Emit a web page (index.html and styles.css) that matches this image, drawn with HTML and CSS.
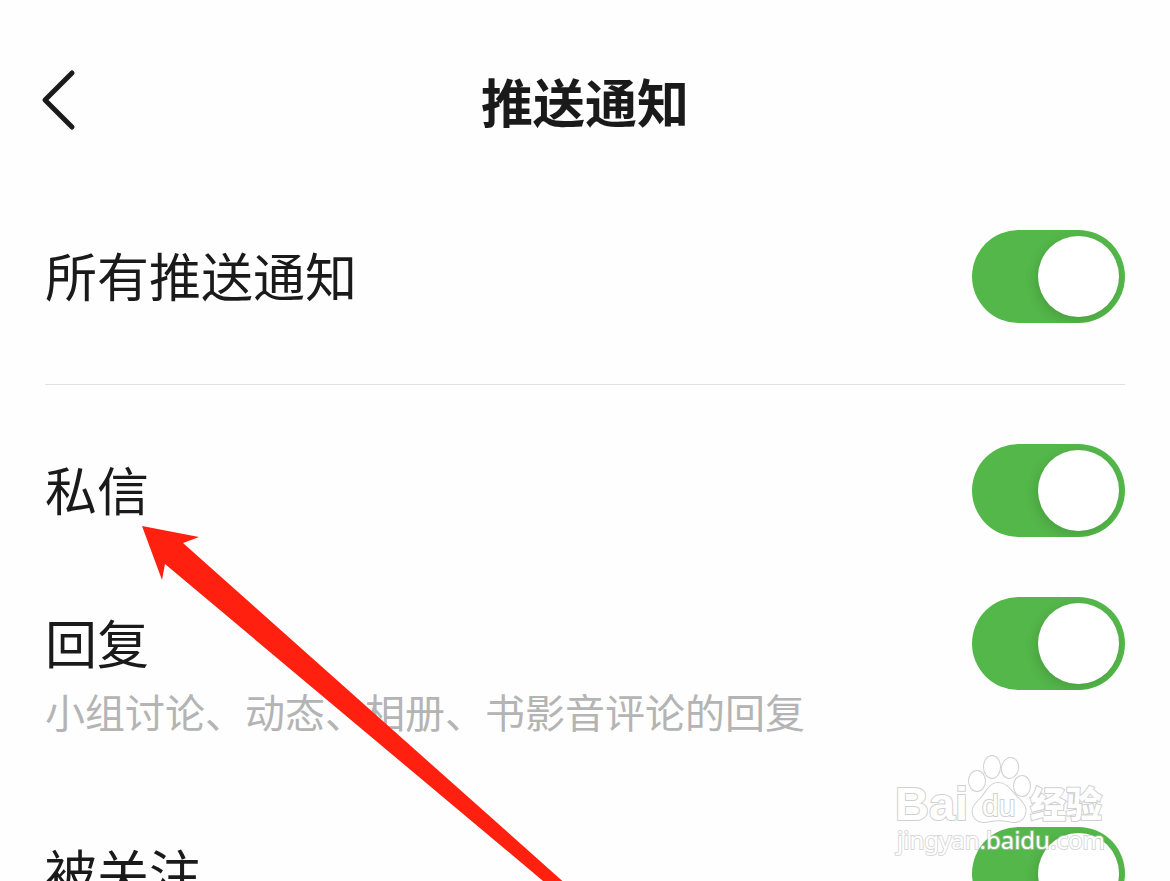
FILE: index.html
```
<!DOCTYPE html>
<html lang="zh-CN">
<head>
<meta charset="UTF-8">
<meta name="viewport" content="width=device-width, initial-scale=1.0">
<title>推送通知</title>
<link rel="stylesheet" href="styles.css">
</head>
<body>

<header class="header">
    <button class="back-button" type="button" aria-label="返回">
        <svg width="36" height="64" viewBox="0 0 36 64"><path d="M32 5 L5 32 L32 59"/></svg>
    </button>
    <h1>推送通知</h1>
</header>

<main class="settings">
    <div class="row row-all">
        <label class="row-title" for="pushAll">所有推送通知</label>
        <input class="switch" type="checkbox" id="pushAll" checked>
    </div>

    <div class="row">
        <label class="row-title" for="pushMessage">私信</label>
        <input class="switch" type="checkbox" id="pushMessage" checked>
    </div>

    <div class="row">
        <div class="row-text">
            <label class="row-title" for="pushReply">回复</label>
            <p class="row-desc">小组讨论、动态、相册、书影音评论的回复</p>
        </div>
        <input class="switch" type="checkbox" id="pushReply" checked>
    </div>

    <div class="row">
        <label class="row-title" for="pushFollow">被关注</label>
        <input class="switch" type="checkbox" id="pushFollow" checked>
    </div>
</main>

<!-- Strzałka wskazująca opcję 私信 -->
<svg class="arrow" width="430" height="360" viewBox="0 0 430 360">
    <polygon points="0,0 57,11 41,17 426,360 407,360 23,38 20,54"/>
</svg>

<!-- Znak wodny -->
<svg class="watermark" width="220" height="110" viewBox="0 0 220 110">
    <g class="mark-logo">
        <text class="mark-name" x="1" y="70">Bai</text>
        <ellipse cx="83" cy="31" rx="8" ry="10"/>
        <ellipse cx="98" cy="17" rx="8" ry="11"/>
        <ellipse cx="116" cy="18" rx="8" ry="10" transform="rotate(12 116 18)"/>
        <ellipse cx="128" cy="36" rx="8" ry="10"/>
        <path d="M104 33 C113 33 117 41 123 47 C129 53 133 57 131 64 C129 72 121 73 114 71 C108 70 102 70 96 71 C89 73 81 72 79 64 C77 57 83 52 88 47 C93 41 96 33 104 33 Z"/>
        <text class="mark-du" x="88" y="66">du</text>
        <text class="mark-cn" x="136" y="68">经验</text>
    </g>
    <text class="mark-url" x="3" y="99">jingyan.baidu.com</text>
</svg>

</body>
</html>
```
FILE: styles.css
```
body {
    position: relative;
    margin: 0;
    height: 100vh;
    overflow: hidden;
    background-color: #fefefe;
    color: #1a1a1a;
    font-family: "Noto Sans CJK SC", sans-serif;
}
.header {
    display: grid;
    grid-template-columns: 76px 1fr 76px;
    align-items: center;
    height: 200px;
    padding-bottom: 30px;
}
.header h1 {
    margin: 0;
    padding-top: 2px;
    text-align: center;
    font-size: 52px;
    line-height: 60px;
    font-weight: 700;
}
.back-button {
    display: flex;
    justify-content: flex-end;
    border: 0;
    padding: 0;
    background: none;
    cursor: pointer;
}
.back-button svg {
    fill: none;
    stroke: #1a1a1a;
    stroke-width: 5;
    stroke-linecap: round;
    stroke-linejoin: round;
}
.settings {
    padding: 0 45px;
}
.row {
    display: flex;
    justify-content: space-between;
    align-items: flex-start;
    margin-bottom: 60px;
}
.row-all {
    padding-bottom: 61px;
    border-bottom: 1px solid #e0e0e0;
    margin-bottom: 59px;
}
.row-title {
    display: block;
    font-size: 52px;
    line-height: 90px;
}
.row-desc {
    margin: 0 0 31px;
    font-size: 40px;
    line-height: 49px;
    color: #b4b4b4;
}
.switch {
    appearance: none;
    flex: none;
    width: 153px;
    height: 93px;
    margin: 0;
    padding: 6px;
    box-sizing: border-box;
    border-radius: 47px;
    overflow: hidden;
    background-color: #ddd;
    cursor: pointer;
}
.switch::before {
    content: "";
    display: block;
    width: 81px;
    height: 81px;
    border-radius: 50%;
    background-color: #fff;
    box-shadow: -3px 4px 12px rgba(0, 0, 0, 0.12);
}
.switch:checked {
    background-color: #54b74a;
}
.switch:checked::before {
    margin-left: auto;
}
.arrow {
    position: absolute;
    top: 526px;
    left: 142px;
    fill: #ff2010;
    pointer-events: none;
}
.watermark {
    position: absolute;
    right: 56px;
    bottom: 21px;
    pointer-events: none;
}
.mark-logo {
    fill: #fff;
    stroke: #d0d0d0;
    stroke-width: 2;
    paint-order: stroke;
}
.mark-name {
    font: 700 47px "Liberation Sans", sans-serif;
}
.mark-du {
    font: 400 30px "Liberation Sans", sans-serif;
}
.mark-cn {
    font: 900 36px "Noto Sans CJK SC", sans-serif;
}
.mark-url {
    font: 400 24px "Noto Sans", sans-serif;
    fill: #fff;
    stroke: rgba(190, 190, 190, 0.6);
    stroke-width: 2;
    paint-order: stroke;
}
```
